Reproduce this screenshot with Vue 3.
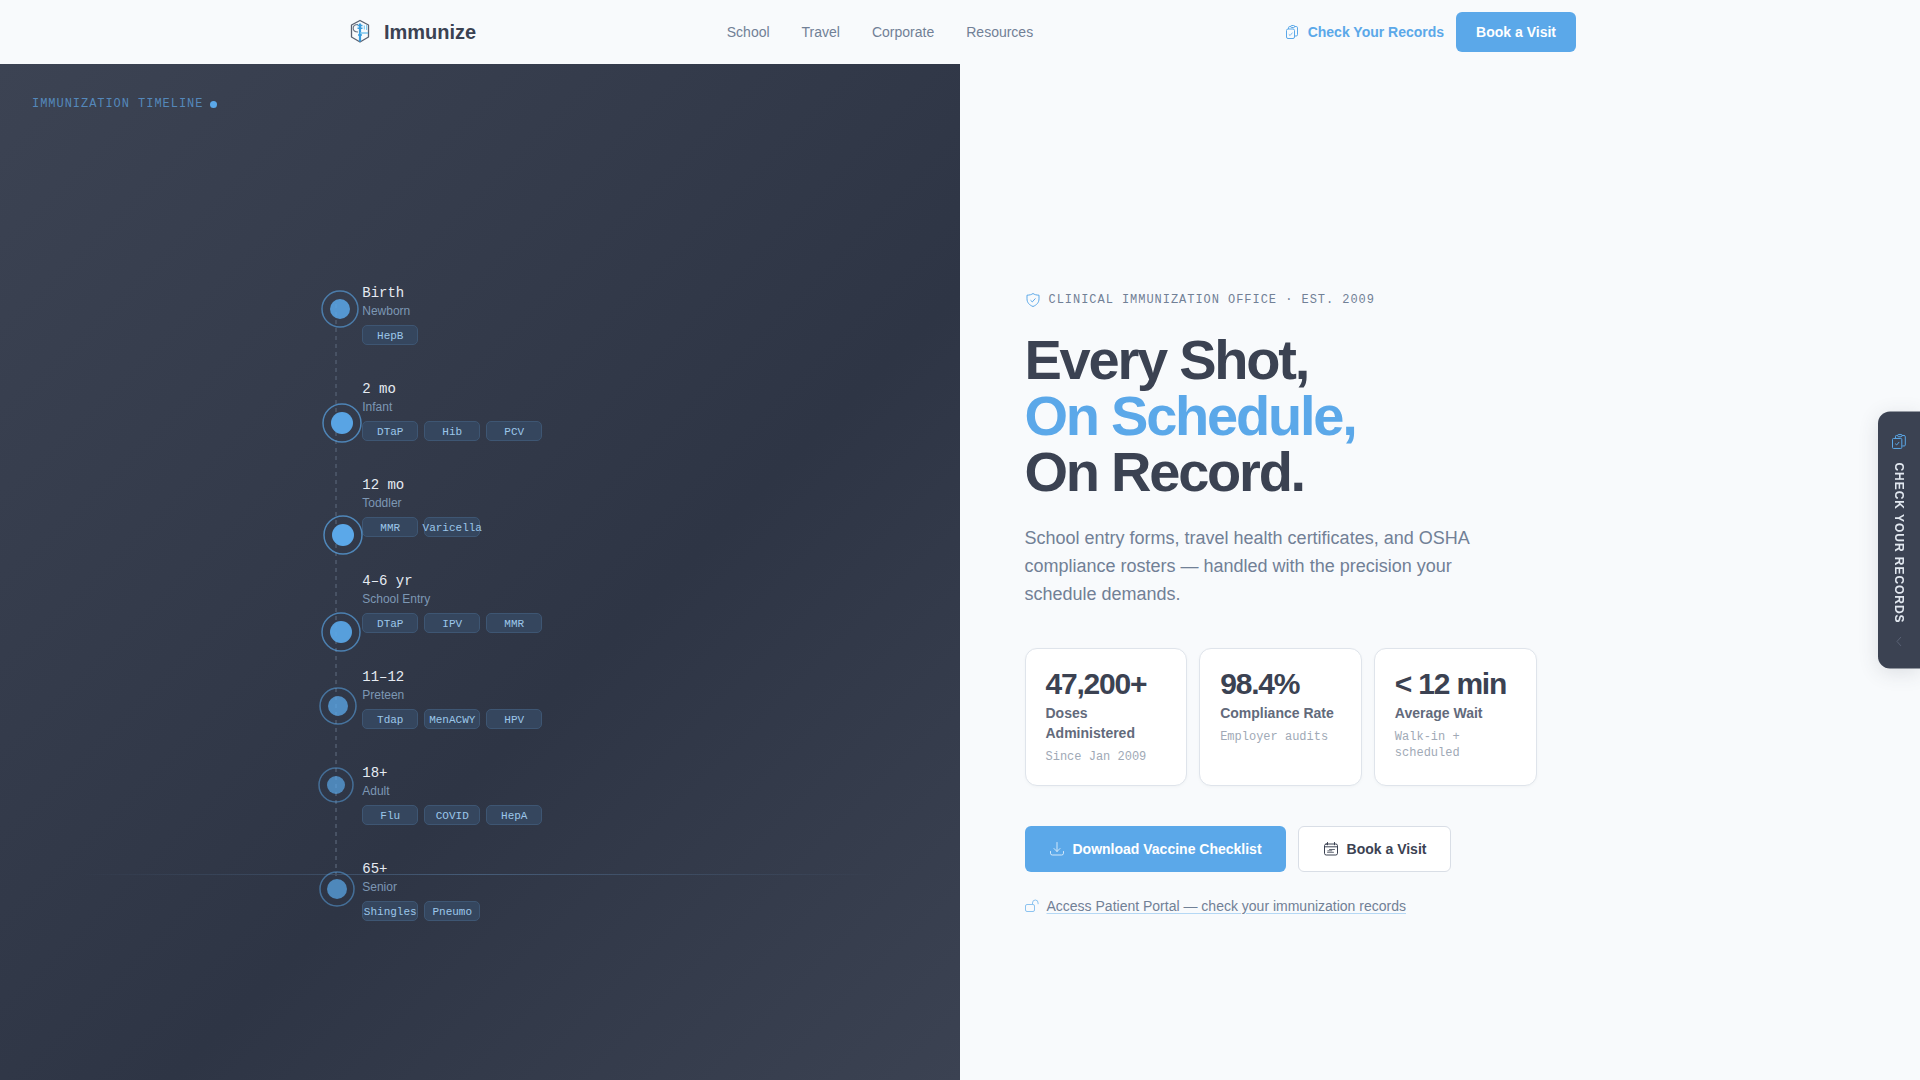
<script setup>
const links = ['School', 'Travel', 'Corporate', 'Resources']

const stages = [
  { age: 'Birth', label: 'Newborn', shots: ['HepB'], x: 20, y: 41, ring: 18, dot: 10, level: 0.85 },
  { age: '2 mo', label: 'Infant', shots: ['DTaP', 'Hib', 'PCV'], x: 22, y: 155, ring: 19, dot: 11, level: 0.97 },
  { age: '12 mo', label: 'Toddler', shots: ['MMR', 'Varicella'], x: 23, y: 267, ring: 19, dot: 11, level: 1 },
  { age: '4–6 yr', label: 'School Entry', shots: ['DTaP', 'IPV', 'MMR'], x: 21, y: 364, ring: 19, dot: 11, level: 0.92 },
  { age: '11–12', label: 'Preteen', shots: ['Tdap', 'MenACWY', 'HPV'], x: 18, y: 438, ring: 18, dot: 10, level: 0.77 },
  { age: '18+', label: 'Adult', shots: ['Flu', 'COVID', 'HepA'], x: 16, y: 517, ring: 17, dot: 9, level: 0.7 },
  { age: '65+', label: 'Senior', shots: ['Shingles', 'Pneumo'], x: 17, y: 621, ring: 17, dot: 10, level: 0.72 },
]

const stats = [
  { value: '47,200+', label: 'Doses Administered', note: 'Since Jan 2009' },
  { value: '98.4%', label: 'Compliance Rate', note: 'Employer audits' },
  { value: '< 12 min', label: 'Average Wait', note: 'Walk-in + scheduled' },
]
</script>

<template>
  <div class="page">
    <header class="topbar">
      <div class="topbar-inner">
        <a class="brand" href="#">
          <svg class="brand-mark" viewBox="0 0 32 32" fill="none" aria-hidden="true">
            <path d="M16 4.500 24.500 9v12L16 26 7.500 21V9z" stroke="#5a6170" stroke-width="1.300" stroke-linejoin="round" />
            <path d="M14 8.500c-3 0-4.800 1.500-4.800 3.800s1.800 3.700 4.800 3.700" stroke="#6b7382" stroke-width="1.100" />
            <path d="M16 7.500v18" stroke="#3b9ee0" stroke-width="2.200" />
            <path d="M13.500 9.500h5M13.500 12.200h5M14 19h4" stroke="#3b9ee0" stroke-width="1.600" />
            <path d="M16 17h8" stroke="#7cc6ee" stroke-width="1.500" />
            <path d="M20.300 9.500v4M22.600 9v5" stroke="#7cc6ee" stroke-width="1.100" />
          </svg>
          <span class="brand-name">Immunize</span>
        </a>
        <nav class="links" aria-label="Main">
          <a v-for="link in links" :key="link" href="#">{{ link }}</a>
        </nav>
        <div class="actions">
          <a class="records-link" href="#">
            <svg class="icon" viewBox="0 0 16 16" fill="none" stroke="currentColor" aria-hidden="true">
              <path d="M4.500 5V3.800Q4.500 2.500 5.800 2.500h1M10.500 2.500h1.700q1.300 0 1.300 1.300v6.900q0 1.300-1.300 1.300h-1.500" />
              <rect x="6.700" y="1.500" width="4" height="2" rx="1" />
              <rect x="2.500" y="5" width="8" height="9.500" rx="1.500" />
              <path d="m4.800 10.300 1.300 1.200 2.400-2.900" stroke-width=".8" />
            </svg>
            Check Your Records
          </a>
          <button class="btn btn-primary btn-small" type="button">Book a Visit</button>
        </div>
      </div>
    </header>

    <main class="hero">
      <section class="timeline-panel" aria-label="Immunization timeline">
        <p class="panel-label">Immunization Timeline <span class="live-dot"></span></p>
        <div class="horizon"></div>
        <div class="timeline">
          <svg class="track" viewBox="0 0 48 672" fill="none" aria-hidden="true">
            <path class="spine" d="M16 36v576" />
            <g v-for="stage in stages" :key="stage.age" :opacity="stage.level">
              <circle class="ring" :cx="stage.x" :cy="stage.y" :r="stage.ring" />
              <circle class="core" :cx="stage.x" :cy="stage.y" :r="stage.dot" />
            </g>
          </svg>
          <ol class="stages">
            <li v-for="stage in stages" :key="stage.age" class="stage">
              <span class="age">{{ stage.age }}</span>
              <span class="stage-label">{{ stage.label }}</span>
              <span class="shots">
                <span v-for="shot in stage.shots" :key="shot" class="shot">{{ shot }}</span>
              </span>
            </li>
          </ol>
        </div>
      </section>

      <section class="intro">
        <p class="eyebrow">
          <svg class="icon" viewBox="0 0 16 16" fill="none" stroke="#5ba8e9" aria-hidden="true">
            <path d="M8 1.500c1.500 1.200 3.500 1.600 6 1.700v3.600c0 3.700-2.200 6.200-6 7.700-3.800-1.500-6-4-6-7.700V3.200c2.500-.1 4.500-.5 6-1.700z" stroke-linejoin="round" />
            <path d="m5.800 8.500 1.500 1.400 2.900-3.200" stroke-linecap="round" />
          </svg>
          Clinical Immunization Office · Est. 2009
        </p>
        <h1>Every Shot,<br><span class="accent">On Schedule,</span><br>On Record.</h1>
        <p class="lead">School entry forms, travel health certificates, and OSHA compliance rosters — handled with the precision your schedule demands.</p>

        <div class="stats">
          <article v-for="stat in stats" :key="stat.label" class="stat">
            <p class="stat-value">{{ stat.value }}</p>
            <p class="stat-label">{{ stat.label }}</p>
            <p class="stat-note">{{ stat.note }}</p>
          </article>
        </div>

        <div class="cta">
          <button class="btn btn-primary" type="button">
            <svg class="icon" viewBox="0 0 16 16" fill="none" stroke="#d3e8fa" stroke-linecap="round" stroke-linejoin="round" aria-hidden="true">
              <path d="M8 1.500v9M5 7.500l3 3 3-3M1.500 10.500v1.700q0 1.800 1.800 1.800h9.400q1.800 0 1.800-1.800v-1.700" />
            </svg>
            Download Vaccine Checklist
          </button>
          <button class="btn btn-outline" type="button">
            <svg class="icon" viewBox="0 0 16 16" fill="none" stroke="currentColor" stroke-linecap="round" aria-hidden="true">
              <path d="M3.200 3h9.600q1.700 0 1.700 1.700v7.600q0 1.700-1.700 1.700H3.200q-1.700 0-1.700-1.700V4.700Q1.500 3 3.200 3zM2 5.800h12M4.500 1.500v2.300M11.500 1.500v2.300" />
              <path d="M6.500 8.500h5M4.500 11.300h6M4.800 9.800h4" stroke-width=".8" />
            </svg>
            Book a Visit
          </button>
        </div>

        <a class="portal" href="#">
          <svg class="portal-icon" viewBox="0 0 14 14" fill="none" stroke="#8cc3f0" aria-hidden="true">
            <rect x=".5" y="5.500" width="9" height="7" rx="1.500" />
            <path d="M7.500 5.500V4q0-3 2.800-3t2.800 3v1.200" />
          </svg>
          <span>Access Patient Portal — check your immunization records</span>
        </a>
      </section>
    </main>

    <button class="side-tab" type="button">
      <svg class="side-icon" viewBox="0 0 18 18" fill="none" stroke="#5ba8e9" aria-hidden="true">
        <path d="M5.500 6V3.800Q5.500 3 6.500 3h1.200M12 3h2q1.300 0 1.300 1.300v8.200q0 1-1 1h-2" />
        <rect x="7.700" y="2" width="4.300" height="2.300" rx="1" />
        <rect x="2.500" y="6" width="9.300" height="10" rx="1" />
        <path d="m5.200 11.200 1.500 1.300 2.500-3" />
      </svg>
      <span class="side-text">Check Your Records</span>
      <svg class="side-chevron" viewBox="0 0 12 12" fill="none" stroke="#5a6275" aria-hidden="true">
        <path d="M8 1.500 4 6l4 4.500" />
      </svg>
    </button>
  </div>
</template>

<style>
body {
  background: #f8fafc;
}
</style>

<style scoped>
.page {
  --ink: #3b4252;
  --blue: #5ba8e9;
  --muted: #718096;
  --sans: "Liberation Sans", Arial, sans-serif;
  --mono: "Liberation Mono", "Courier New", monospace;
  display: flex;
  flex-direction: column;
  min-height: 100vh;
  background: #f8fafc;
  color: var(--ink);
  font-family: var(--sans);
  font-size: 14px;
  line-height: 20px;
}

p,
h1,
ol {
  margin: 0;
  padding: 0;
}

a {
  color: inherit;
  text-decoration: none;
}

.icon {
  width: 16px;
  height: 16px;
  flex: none;
}

.topbar-inner {
  box-sizing: border-box;
  display: flex;
  align-items: center;
  justify-content: space-between;
  max-width: 1280px;
  height: 64px;
  margin: 0 auto;
  padding: 0 24px;
}

.brand {
  display: flex;
  align-items: center;
  gap: 8px;
}

.brand-mark {
  width: 32px;
  height: 32px;
}

.brand-name {
  font-size: 20px;
  font-weight: 700;
  line-height: 28px;
}

.links {
  display: flex;
  gap: 32px;
  color: var(--muted);
}

.actions {
  display: flex;
  align-items: center;
  gap: 12px;
}

.records-link {
  display: flex;
  align-items: center;
  gap: 8px;
  color: var(--blue);
  font-weight: 700;
}

.btn {
  display: flex;
  align-items: center;
  gap: 8px;
  height: 46px;
  padding: 0 24px;
  border: 0;
  border-radius: 6px;
  font: 700 14px/20px var(--sans);
  cursor: pointer;
}

.btn-primary {
  background: var(--blue);
  color: #fff;
}

.btn-outline {
  border: 1px solid #d9dee6;
  background: #fff;
  color: var(--ink);
}

.btn-small {
  height: 40px;
  padding: 0 20px;
}

.hero {
  flex: 1;
  display: grid;
  grid-template-columns: 1fr 1fr;
  gap: 1px;
}

.timeline-panel {
  position: relative;
  display: flex;
  flex-direction: column;
  align-items: center;
  justify-content: center;
  padding-top: 64px;
  background: linear-gradient(135deg, #3c4353 0%, #2e3545 60%, #3b4252 100%);
}

.panel-label {
  position: absolute;
  top: 32px;
  left: 32px;
  display: flex;
  align-items: center;
  gap: 7px;
  color: #5488bb;
  font: 12px/16px var(--mono);
  letter-spacing: 0.08em;
  text-transform: uppercase;
}

.live-dot {
  width: 7px;
  height: 7px;
  border-radius: 50%;
  background: var(--blue);
}

.horizon {
  position: absolute;
  right: 8%;
  bottom: 205px;
  left: 8%;
  height: 1px;
  background: linear-gradient(90deg, transparent, rgba(110, 160, 210, 0.35), transparent);
}

.timeline {
  position: relative;
  width: 319px;
}

.track {
  position: absolute;
  top: 0;
  left: 0;
  width: 48px;
  height: 672px;
  overflow: visible;
}

.spine {
  stroke: #485264;
  stroke-width: 2;
  stroke-dasharray: 4 4;
}

.ring {
  stroke: var(--blue);
  stroke-opacity: 0.7;
  stroke-width: 1.5;
}

.core {
  fill: var(--blue);
}

.stages {
  list-style: none;
}

.stage {
  box-sizing: border-box;
  display: flex;
  flex-direction: column;
  height: 96px;
  padding: 16px 0 0 42px;
}

.age {
  color: #e6ebf2;
  font: 14px/18px var(--mono);
}

.stage-label {
  color: #7d97b4;
  font-size: 12px;
  line-height: 18px;
}

.shots {
  display: flex;
  gap: 6px;
  margin-top: 5px;
}

.shot {
  box-sizing: border-box;
  display: flex;
  justify-content: center;
  width: 56px;
  height: 20px;
  border: 1px solid #3e5673;
  border-radius: 5px;
  background: #35465e;
  color: #9cc6ea;
  font: 11px/20px var(--mono);
}

.intro {
  display: flex;
  flex-direction: column;
  align-items: flex-start;
  justify-content: center;
  padding: 64px 64px 0;
}

.eyebrow {
  display: flex;
  align-items: center;
  gap: 8px;
  margin-bottom: 24px;
  color: var(--muted);
  font: 12px/16px var(--mono);
  letter-spacing: 0.08em;
  text-transform: uppercase;
}

h1 {
  margin-bottom: 24px;
  font-size: 56px;
  line-height: 56px;
  letter-spacing: -0.04em;
}

.accent {
  color: var(--blue);
}

.lead {
  max-width: 480px;
  margin-bottom: 40px;
  color: var(--muted);
  font-size: 18px;
  line-height: 28px;
}

.stats {
  display: grid;
  grid-template-columns: repeat(3, 1fr);
  gap: 12px;
  width: 100%;
  max-width: 512px;
  margin-bottom: 40px;
}

.stat {
  padding: 20px;
  border: 1px solid #dfe4eb;
  border-radius: 12px;
  background: #fff;
  box-shadow: 0 1px 3px rgba(59, 66, 82, 0.04);
}

.stat-value {
  font-size: 30px;
  font-weight: 700;
  line-height: 30px;
  letter-spacing: -0.04em;
  white-space: nowrap;
}

.stat-label {
  margin-top: 4px;
  color: #626a7b;
  font-weight: 700;
}

.stat-note {
  margin-top: 6px;
  color: #a0a9b6;
  font: 12px/16px var(--mono);
}

.cta {
  display: flex;
  gap: 12px;
  margin-bottom: 24px;
}

.portal {
  display: flex;
  align-items: center;
  gap: 8px;
  color: var(--muted);
}

.portal-icon {
  width: 14px;
  height: 14px;
}

.portal span {
  text-decoration: underline;
  text-decoration-color: #b5d8f5;
  text-underline-offset: 2px;
}

.side-tab {
  position: fixed;
  top: 50%;
  right: 0;
  display: flex;
  flex-direction: column;
  align-items: center;
  gap: 12px;
  width: 42px;
  padding: 21px 0;
  border: 0;
  border-radius: 12px 0 0 12px;
  background: var(--ink);
  box-shadow: 0 4px 20px rgba(59, 66, 82, 0.15);
  color: #e2e8f0;
  transform: translateY(-50%);
  cursor: pointer;
}

.side-icon {
  width: 18px;
  height: 18px;
}

.side-text {
  font: 700 12px/16px var(--sans);
  letter-spacing: 0.08em;
  text-transform: uppercase;
  writing-mode: vertical-rl;
}

.side-chevron {
  width: 12px;
  height: 12px;
}
</style>
